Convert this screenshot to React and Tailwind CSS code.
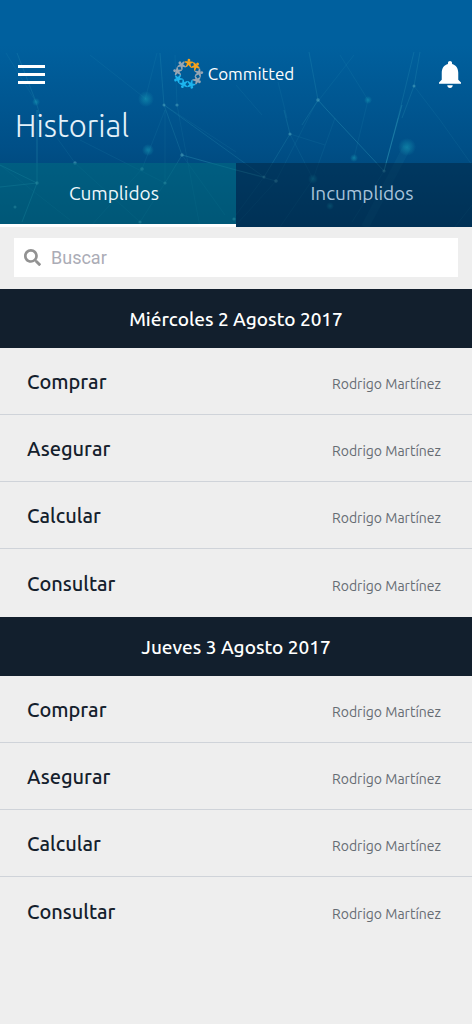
import React, { useState } from "react";
import { FaSearch } from "react-icons/fa";

const groups = [
  { date: "Miércoles 2 Agosto 2017", items: ["Comprar", "Asegurar", "Calcular", "Consultar"] },
  { date: "Jueves 3 Agosto 2017", items: ["Comprar", "Asegurar", "Calcular", "Consultar"] },
];

const stars = [
  "#f6a21c", "#f6a21c", "#98a6b3", "#98a6b3", "#1db4ee",
  "#1db4ee", "#1db4ee", "#98a6b3", "#98a6b3",
];

const Logo = () => (
  <svg viewBox="-16 -16 32 32" className="h-8 w-8" aria-hidden="true">
    {stars.map((color, i) => (
      <g key={i} fill={color} transform={`rotate(${i * 40 + 4}) translate(0 -10.8)`}>
        <circle cx="0" cy="-3" r="1.4" />
        <polygon points="0,-2 4.2,-1.8 4.2,-0.7 1.7,0.4 2.9,4 1.7,4 0,1.8 -1.7,4 -2.9,4 -1.7,0.4 -4.2,-0.7 -4.2,-1.8" />
      </g>
    ))}
  </svg>
);

// Thin lines and nodes behind the header
const Network = () => (
  <svg
    viewBox="0 0 472 227"
    preserveAspectRatio="xMidYMid slice"
    className="absolute inset-0 h-full w-full"
    aria-hidden="true"
  >
    <defs>
      <radialGradient id="glow">
        <stop offset="0" stopColor="#17a0b8" stopOpacity="0.55" />
        <stop offset="1" stopColor="#17a0b8" stopOpacity="0" />
      </radialGradient>
    </defs>
    <g fill="none" stroke="#35a3bf" strokeWidth="1">
      <path
        strokeOpacity="0.32"
        d="M37 110V183L0 165M0 187 37 183 22 222M182 155 236 170 264 177M327 110 384 171M318 100 327 110M402 105 384 171 398 118"
      />
      <path
        strokeOpacity="0.2"
        d="M17 53 36 102 40 115M160 53 164 105M164 105 182 155M165 183 182 155M264 177 290 134 284 110M309 52 318 100M318 100 302 125M414 52 398 118M420 52 414 86 402 118M164 105 264 177M236 170 276 181"
      />
      <path
        strokeOpacity="0.11"
        d="M6 53 36 102M90 55 146 99M157 53 145 100M175 55 177 105M164 105 236 152M142 169 165 110V183M142 169 90 227M80 140 165 183M37 110 75 163 140 222M182 155 225 215M0 165 70 220M165 183 140 222M290 134 325 145M276 181 315 105 354 55M276 181 236 225M340 55 368 100 354 158M414 86 440 120 472 165M236 85 262 115M278 82 287 118M264 177 236 215M384 171 352 222M335 118 313 179 280 227M177 105 200 227M290 134 313 179M455 227 472 205"
      />
      <path strokeOpacity="0.08" strokeWidth="8" d="M407 147 365 227" />
    </g>
    <g fill="url(#glow)">
      <circle cx="146" cy="99" r="8" />
      <circle cx="148" cy="150" r="6" />
      <circle cx="407" cy="147" r="9" />
      <circle cx="313" cy="179" r="5" />
      <circle cx="354" cy="158" r="4" />
      <circle cx="36" cy="102" r="4" />
      <circle cx="368" cy="100" r="4" />
      <circle cx="330" cy="206" r="4" />
    </g>
    <g fill="#5fb4c8" fillOpacity="0.45">
      <circle cx="37" cy="183" r="1.7" />
      <circle cx="75" cy="163" r="1.7" />
      <circle cx="142" cy="169" r="1.8" />
      <circle cx="165" cy="183" r="1.6" />
      <circle cx="182" cy="155" r="1.7" />
      <circle cx="15" cy="207" r="1.5" />
      <circle cx="140" cy="222" r="1.6" />
      <circle cx="234" cy="219" r="1.6" />
      <circle cx="164" cy="105" r="1.5" />
      <circle cx="177" cy="105" r="1.6" />
      <circle cx="264" cy="177" r="1.5" />
      <circle cx="276" cy="181" r="1.8" />
      <circle cx="290" cy="134" r="1.6" />
      <circle cx="318" cy="100" r="1.8" />
      <circle cx="384" cy="171" r="1.6" />
      <circle cx="414" cy="86" r="1.5" />
    </g>
  </svg>
);

const Header = ({ tab, setTab }) => (
  <header className="relative bg-linear-to-b from-[#00609e] from-20% via-[#004f87] via-65% to-[#003f6c]">
    <Network />
    <div className="relative">
      <div className="grid grid-cols-3 items-center px-[11px] pt-[53px]">
        <button type="button" aria-label="Menú" className="ml-[7px] w-7 space-y-[5px] py-3">
          <span className="block h-[3px] w-[27px] bg-white" />
          <span className="block h-[3px] w-[27px] bg-white" />
          <span className="block h-[3px] w-[27px] bg-white" />
        </button>
        <div className="flex items-center justify-center gap-1 pr-[6px] pb-0.5 text-[17px] text-white">
          <Logo />
          <span>Committed</span>
        </div>
        <button type="button" aria-label="Notificaciones" className="justify-self-end">
          <svg viewBox="4 2.5 16 19.5" className="h-[27px] w-[22px]" fill="#fff">
            <path d="M12 22c1.1 0 2-.9 2-2h-4c0 1.1.89 2 2 2zm6-6v-5c0-3.07-1.64-5.64-4.5-6.32V4c0-.83-.67-1.5-1.5-1.5s-1.5.67-1.5 1.5v.68C7.63 5.36 6 7.92 6 11v5l-2 2v1h16v-1l-2-2z" />
          </svg>
        </button>
      </div>
      <h1 className="mt-2 px-[15px] pb-[15px] text-[31px] leading-11 font-light text-[#e4f1fa]">
        Historial
      </h1>
      <nav className="grid h-16 grid-cols-2 text-[19px]">
        {["Cumplidos", "Incumplidos"].map((name) => (
          <button
            key={name}
            type="button"
            onClick={() => setTab(name)}
            className={
              tab === name
                ? "border-b-3 border-white bg-[#007083]/50 pr-2 text-[#eef8fb]"
                : "bg-[#002440]/50 pb-1 pl-4 text-[#a9c4dc]"
            }
          >
            {name}
          </button>
        ))}
      </nav>
    </div>
  </header>
);

const Search = () => (
  <div className="px-[14px] pt-[11px] pb-3">
    <label className="flex h-[39px] items-center gap-[10px] bg-white px-[10px]">
      <FaSearch className="h-[17px] w-[17px] shrink-0 text-[#929292]" />
      <input
        type="text"
        aria-label="Buscar"
        placeholder="Buscar"
        className="w-full font-[Roboto,sans-serif] text-lg outline-none placeholder:text-[#abacb6]"
      />
    </label>
  </div>
);

const Group = ({ date, items }) => (
  <section>
    <h2 className="flex h-[59px] items-center justify-center bg-[#121f2d] pt-0.5 text-[19px] font-medium text-white">
      {date}
    </h2>
    <ul className="divide-y divide-[#cfd3d9] pb-px">
      {items.map((item) => (
        <li key={item} className="flex h-[67px] items-center justify-between pt-0.5 pr-[31px] pl-[27px]">
          <span className="text-xl font-medium text-[#14202c]">{item}</span>
          <span className="pt-1 text-sm text-[#666c73]">Rodrigo Martínez</span>
        </li>
      ))}
    </ul>
  </section>
);

const App = () => {
  const [tab, setTab] = useState("Cumplidos");

  return (
    <div className="min-h-screen bg-[#eeeeee] font-['Ubuntu','Noto_Sans',sans-serif]">
      <Header tab={tab} setTab={setTab} />
      <main>
        <Search />
        {groups.map((group) => (
          <Group key={group.date} date={group.date} items={group.items} />
        ))}
      </main>
    </div>
  );
};

export default App;
